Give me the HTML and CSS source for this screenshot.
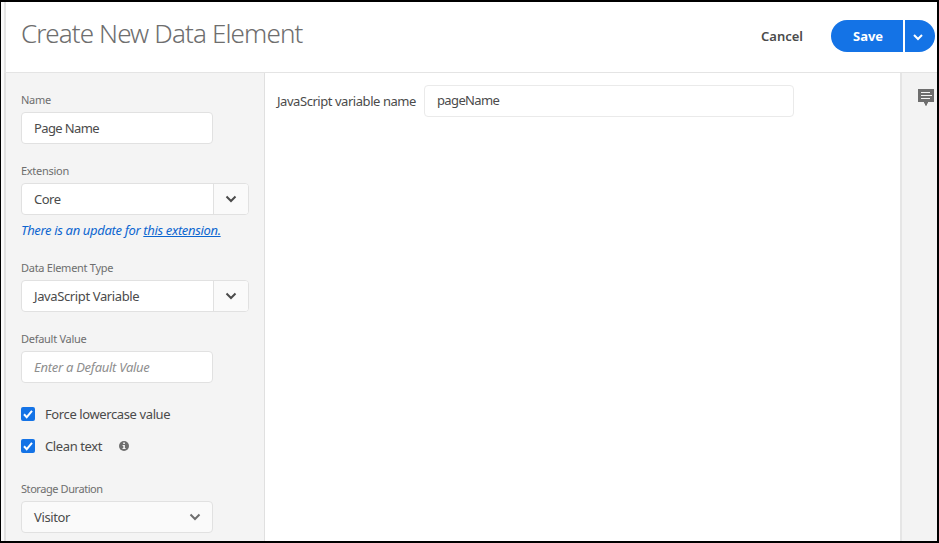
FILE: index.html
```html
<!DOCTYPE html>
<html lang="en">
<head>
<meta charset="utf-8">
<title>Create New Data Element</title>
<link rel="stylesheet" href="styles.css">
</head>
<body>
<div class="frame">
  <header class="header">
    <h1 class="title">Create New Data Element</h1>
    <button class="cancel">Cancel</button>
    <div class="split">
      <button class="save">Save</button>
      <button class="more" aria-label="More save options"><svg width="10" height="7" viewBox="0 0 10 7"><path d="M1 1l4 4 4-4"/></svg></button>
    </div>
  </header>
  <div class="body">
    <aside class="sidebar">
      <section class="field">
        <span class="label name">Name</span>
        <div class="input"><span class="page-name">Page Name</span></div>
      </section>
      <section class="field field-ext">
        <span class="label extension">Extension</span>
        <div class="combo"><div class="value"><span class="core">Core</span></div><div class="arrow"><svg width="12" height="8" viewBox="0 0 12 8"><path d="M1.500 1.500L6 6l4.500-4.500"/></svg></div></div>
        <p class="notice">There is an update for <a>this extension.</a></p>
      </section>
      <section class="field">
        <span class="label type">Data Element Type</span>
        <div class="combo"><div class="value"><span class="js-variable">JavaScript Variable</span></div><div class="arrow"><svg width="12" height="8" viewBox="0 0 12 8"><path d="M1.500 1.500L6 6l4.500-4.500"/></svg></div></div>
      </section>
      <section class="field field-default">
        <span class="label default">Default Value</span>
        <div class="input"><span class="placeholder">Enter a Default Value</span></div>
      </section>
      <div class="check"><span class="box"><svg width="14" height="14" viewBox="0 0 14 14"><path d="M3 7.300l2.700 2.900L11 3.800"/></svg></span><span class="force">Force lowercase value</span></div>
      <div class="check"><span class="box"><svg width="14" height="14" viewBox="0 0 14 14"><path d="M3 7.300l2.700 2.900L11 3.800"/></svg></span><span class="clean">Clean text</span><svg class="info" width="10" height="10" viewBox="0 0 10 10"><circle cx="5" cy="5" r="5"/><path d="M4.200 1.500h1.700v1.600H4.200zM3.600 4.100h2.300v3h.7v1H3.500v-1h.8v-2h-.7z"/></svg></div>
      <section class="field field-storage">
        <span class="label storage">Storage Duration</span>
        <div class="input select"><span class="visitor">Visitor</span><svg width="12" height="8" viewBox="0 0 12 8"><path d="M1.500 1.500L6 6l4.500-4.500"/></svg></div>
      </section>
    </aside>
    <main class="content">
      <span class="variable-label">JavaScript variable name</span>
      <div class="variable-input"><span class="page-value">pageName</span></div>
    </main>
    <aside class="rail"><svg width="16" height="17" viewBox="0 0 16 17"><path class="bubble" d="M0 0h16v13h-6v1.500h-1v2H7v-2H6V13H0z"/><path class="lines" d="M3 3.500h9M3 6.500h11M3 9.500h9"/></svg></aside>
  </div>
</div>
</body>
</html>
```
FILE: styles.css
```css
* { box-sizing: border-box; }
body { margin: 0; font-family: "Noto Sans", "Open Sans", sans-serif; font-size: 13px; color: #4b4b4b; background: #fff; }
.frame { display: flex; flex-direction: column; width: 939px; height: 543px; border: solid #000; border-width: 2px 2px 2px 1px; padding-left: 3px; background: #fafafa; overflow: hidden; }
button { border: 0; padding: 0; font: inherit; white-space: nowrap; }
svg { flex: none; fill: none; stroke: #4b4b4b; stroke-width: 2; }
span { white-space: nowrap; }
.header { display: flex; flex: none; height: 71px; padding: 18px 2px 0 15px; background: #fff; border: solid #e4e4e4; border-width: 0 0 1px 2px; }
.title { flex: 1; margin: -1px 0 0; font-size: 26px; line-height: 28px; font-weight: 300; letter-spacing: -0.87px; color: #6e6e6e; white-space: nowrap; }
.cancel { width: 42px; height: 32px; margin-right: 28px; background: none; color: #4b4b4b; font-weight: 600; text-align: left; }
.split { display: flex; gap: 2px; height: 32px; }
.save { width: 72px; border-radius: 16px 0 0 16px; background: #1473e6; color: #fff; font-weight: 700; padding-left: 22px; text-align: left; }
.more { display: flex; align-items: center; justify-content: center; width: 30px; padding-right: 4px; border-radius: 0 16px 16px 0; background: #1473e6; }
.more svg { stroke: #fff; margin-top: 2px; }
.body { display: flex; flex: 1; min-height: 0; }
.sidebar { width: 261px; flex: none; padding: 19px 0 0 15px; background: #f4f4f4; border: solid #e0e0e0; border-width: 0 1px 0 2px; overflow: hidden; }
.field { display: flex; flex-direction: column; height: 71px; }
.field-ext { height: 97px; }
.field-default { height: 67px; }
.label { height: 16px; margin-bottom: 4px; font-size: 11px; line-height: 16px; letter-spacing: -0.28px; color: #6e6e6e; }
.storage { letter-spacing: -0.43px; }
.input { display: flex; align-items: center; flex: none; width: 192px; height: 32px; padding-left: 12px; background: #fff; border: 1px solid #e1e1e1; border-radius: 4px; }
.combo { display: flex; flex: none; width: 228px; height: 32px; background: #fff; border: 1px solid #e1e1e1; border-radius: 4px; overflow: hidden; }
.value { display: flex; align-items: center; width: 191px; padding-left: 12px; }
.arrow { display: flex; align-items: center; justify-content: center; flex: 1; background: #fafafa; border-left: 1px solid #e1e1e1; }
.page-name, .page-value { letter-spacing: -0.63px; }
.core { letter-spacing: -0.5px; }
.js-variable, .visitor { letter-spacing: -0.38px; }
.force, .clean { letter-spacing: -0.39px; }
.notice { margin: 6px 0 0; font-style: italic; line-height: 18px; letter-spacing: -0.34px; color: #0d66d0; white-space: nowrap; }
.notice a { text-decoration: underline; }
.placeholder { font-style: italic; letter-spacing: -0.27px; color: #8e8e8e; }
.check { display: flex; align-items: center; height: 32px; }
.box { display: flex; width: 14px; height: 14px; margin-right: 10px; border-radius: 2px; background: #1473e6; }
.box svg { stroke: #fff; }
.clean { width: 73px; }
.info { margin-left: 1px; stroke: none; fill: #6e6e6e; }
.info path { fill: #f4f4f4; }
.field-storage { padding-top: 19px; height: 80px; }
.select { justify-content: space-between; padding-right: 11px; background: #fafafa; }
.select svg { stroke: #6e6e6e; }
.content { display: flex; flex: 1; align-items: flex-start; padding: 12px 0 0 12px; background: #fff; }
.variable-label { width: 147px; line-height: 32px; letter-spacing: -0.45px; }
.variable-input { display: flex; align-items: center; width: 370px; height: 32px; padding-left: 12px; border: 1px solid #eaeaea; border-radius: 4px; }
.page-value { margin-top: -2px; }
.rail { flex: none; width: 37px; padding: 16px 0 0 16px; background: #f3f3f3; border-left: 2px solid #e5e5e5; }
.rail svg { display: block; }
.bubble { fill: #6e6e6e; stroke: none; }
.lines { stroke: #f4f4f4; stroke-width: 1; }
```
